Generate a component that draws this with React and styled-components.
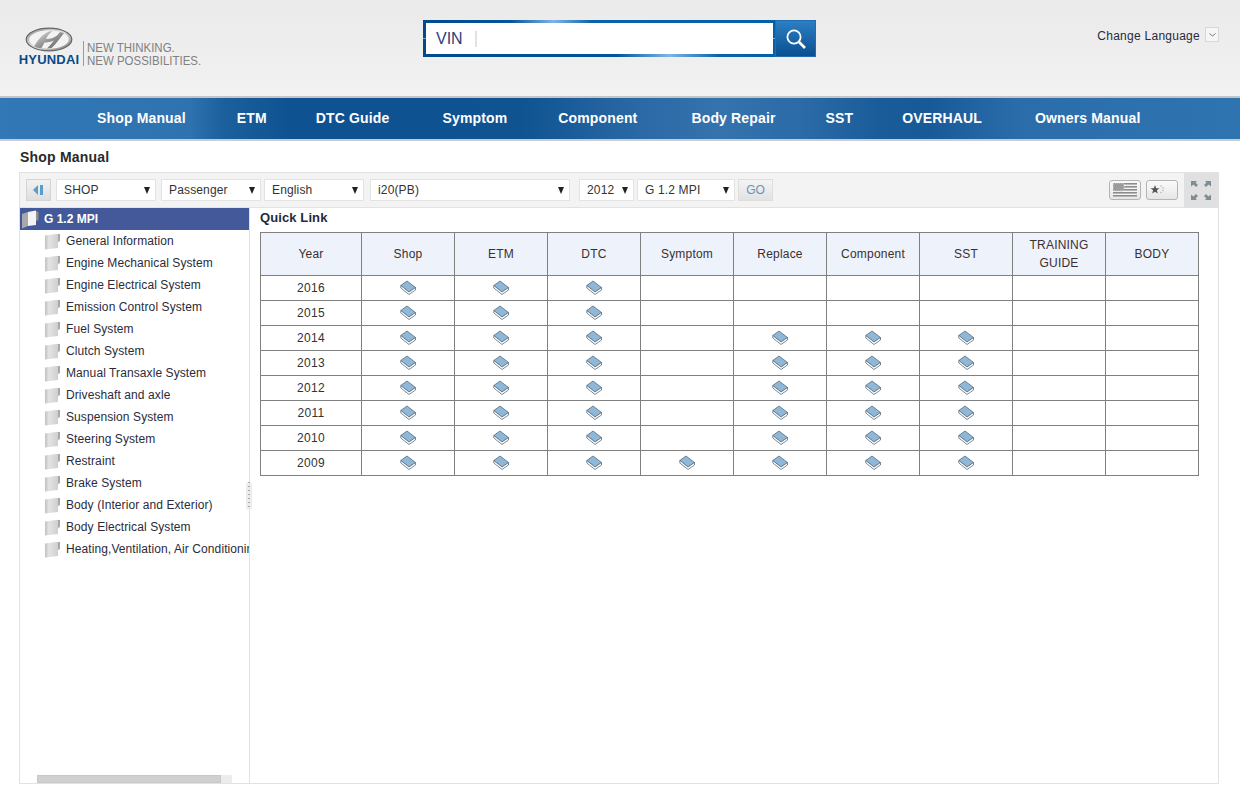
import React from 'react'
import styled, { createGlobalStyle } from 'styled-components'

const GlobalStyle = createGlobalStyle`
  html, body { margin: 0; padding: 0; background: #fff; }
  body { font-family: "Liberation Sans", Arial, sans-serif; font-size: 12px; color: #222; }
`

const menus = ['Shop Manual', 'ETM', 'DTC Guide', 'Symptom', 'Component', 'Body Repair', 'SST', 'OVERHAUL', 'Owners Manual']
const tree = [
  'General Information', 'Engine Mechanical System', 'Engine Electrical System', 'Emission Control System',
  'Fuel System', 'Clutch System', 'Manual Transaxle System', 'Driveshaft and axle', 'Suspension System',
  'Steering System', 'Restraint', 'Brake System', 'Body (Interior and Exterior)', 'Body Electrical System',
  'Heating,Ventilation, Air Conditioning',
]
const columns = ['Year', 'Shop', 'ETM', 'DTC', 'Symptom', 'Replace', 'Component', 'SST', 'TRAINING GUIDE', 'BODY']
const rows = [
  { year: 2016, books: [1, 1, 1, 0, 0, 0, 0, 0, 0] },
  { year: 2015, books: [1, 1, 1, 0, 0, 0, 0, 0, 0] },
  { year: 2014, books: [1, 1, 1, 0, 1, 1, 1, 0, 0] },
  { year: 2013, books: [1, 1, 1, 0, 1, 1, 1, 0, 0] },
  { year: 2012, books: [1, 1, 1, 0, 1, 1, 1, 0, 0] },
  { year: 2011, books: [1, 1, 1, 0, 1, 1, 1, 0, 0] },
  { year: 2010, books: [1, 1, 1, 0, 1, 1, 1, 0, 0] },
  { year: 2009, books: [1, 1, 1, 1, 1, 1, 1, 0, 0] },
]
const selects = [
  { label: 'SHOP', width: 100, gap: 5 },
  { label: 'Passenger', width: 100, gap: 3 },
  { label: 'English', width: 100, gap: 6 },
  { label: 'i20(PB)', width: 200, gap: 9 },
  { label: '2012', width: 55, gap: 3 },
  { label: 'G 1.2 MPI', width: 98, gap: 3 },
]

const Header = styled.header`
  height: 96px;
  background: linear-gradient(#eaeaea, #f2f2f2);
  display: grid;
  grid-template-columns: 423px 393px 1fr;
`
const LogoWrap = styled.div`
  padding: 27px 0 0 18px;
  display: flex;
  align-items: flex-start;
`
const Brand = styled.div`
  width: 62px;
  display: flex;
  flex-direction: column;
  align-items: center;
`
const BrandName = styled.span`
  font-size: 13px;
  line-height: 12px;
  margin-top: 2px;
  font-weight: bold;
  letter-spacing: 0.2px;
  color: #0b4a86;
  white-space: nowrap;
`
const Tagline = styled.div`
  margin: 14px 0 0 3px;
  height: 25px;
  padding-left: 3px;
  border-left: 1px solid #9a9a9a;
  color: #808080;
  font-size: 13.5px;
  line-height: 13px;
  white-space: nowrap;
`
const TaglineText = styled.span`
  display: block;
  transform: scaleX(0.85);
  transform-origin: left center;
`
const SearchWrap = styled.div`
  padding-top: 20px;
`
const Search = styled.div`
  height: 37px;
  display: flex;
`
const SearchField = styled.div`
  flex: 1;
  padding: 3px 2px 3px 3px;
  background:
    linear-gradient(90deg, #014a8e 0%, #02559b 25%, #7db5e6 37%, #0a62a8 48%, #0660a7 100%) top / 100% 50% no-repeat,
    linear-gradient(90deg, #014a8e 0%, #02559b 55%, #7db5e6 70%, #0a62a8 84%, #0660a7 100%) bottom / 100% 50% no-repeat;
`
const SearchInner = styled.div`
  height: 100%;
  background: #fff;
  display: flex;
  align-items: center;
  padding-left: 10px;
`
const VinLabel = styled.span`
  font-size: 16px;
  color: #2a3f7e;
  width: 39px;
  height: 16px;
  line-height: 16px;
  border-right: 2px solid #e2e2e2;
`
const SearchButton = styled.div`
  width: 41px;
  border: 1px solid #1f6cb0;
  box-sizing: border-box;
  background: linear-gradient(#2c7fc4, #0a4f90);
  display: flex;
  align-items: center;
  justify-content: center;
`
const Language = styled.div`
  padding: 28px 21px 0 0;
  display: flex;
  justify-content: flex-end;
  align-items: flex-start;
  gap: 5px;
  letter-spacing: 0.26px;
  line-height: 16px;
  color: #2a2a3c;
`
const LanguageArrow = styled.span`
  width: 14px;
  height: 15px;
  margin-top: -1px;
  box-sizing: border-box;
  border: 1px solid #d8d8d8;
  background: #f6f6f6;
  display: flex;
  align-items: center;
  justify-content: center;
`
const Nav = styled.nav`
  height: 39px;
  padding: 0 0 2px 97px;
  border-top: 2px solid #c4c4c4;
  border-bottom: 2px solid #c9cdd2;
  background: linear-gradient(90deg, #3278b6 0, #2f72b0 190px, #1c5f9d 225px, #0e5291 290px, #0f5391 520px, #2a69a6 640px, #3473ad 720px, #2a6ba8 800px, #1a5c99 880px, #185a98 930px, #2b6dab 1020px, #2e74b0 1240px);
  display: flex;
  align-items: center;
`
const NavItem = styled.a`
  color: #fff;
  font-size: 14px;
  font-weight: bold;
  letter-spacing: 0.15px;
  margin-right: ${p => p.$gap}px;
  white-space: nowrap;
`
const Title = styled.h1`
  margin: 0;
  padding: 8px 0 0 20px;
  height: 23px;
  font-size: 14px;
  line-height: 16px;
  letter-spacing: 0.2px;
  color: #2a2a2a;
`
const Panel = styled.section`
  margin: 0 21px 0 19px;
  height: 612px;
  box-sizing: border-box;
  border: 1px solid #e2e2e2;
  display: flex;
  flex-direction: column;
`
const Toolbar = styled.div`
  height: 35px;
  flex: none;
  background: #f3f3f3;
  border-bottom: 1px solid #e2e2e2;
  display: flex;
  align-items: flex-start;
  padding: 6px 0 0 6px;
  box-sizing: border-box;
`
const BackButton = styled.div`
  width: 25px;
  height: 22px;
  box-sizing: border-box;
  border: 1px solid #d4d4d4;
  background: linear-gradient(#f2f2f2, #dedede);
  margin-right: 5px;
  display: flex;
  align-items: center;
  justify-content: center;
`
const Select = styled.div`
  width: ${p => p.$width}px;
  margin-right: ${p => p.$gap}px;
  height: 22px;
  box-sizing: border-box;
  flex: none;
  border: 1px solid #e3e3e3;
  background: #fff;
  display: flex;
  align-items: center;
  justify-content: space-between;
  padding: 0 4px 0 7px;
  letter-spacing: 0.15px;
  color: #333;
`
const SelectArrow = styled.span`
  width: 0;
  height: 0;
  margin-right: 1px;
  border-left: 3px solid transparent;
  border-right: 3px solid transparent;
  border-top: 7px solid #222;
`
const GoButton = styled.div`
  width: 35px;
  height: 22px;
  box-sizing: border-box;
  border: 1px solid #dedede;
  background: linear-gradient(#f4f4f4, #e2e2e2);
  color: #6a93b8;
  text-align: center;
  line-height: 20px;
`
const ToolbarRight = styled.div`
  margin-left: auto;
  margin-top: -6px;
  display: flex;
  align-items: flex-start;
`
const FlagButton = styled.div`
  width: 32px;
  height: 20px;
  margin: 7px 5px 0 0;
  box-sizing: border-box;
  border: 1px solid #b4b4b4;
  border-radius: 3px;
  background: linear-gradient(#fafafa, #e6e6e6);
  display: flex;
  align-items: center;
  padding-left: 3px;
`
const ExpandBox = styled.div`
  margin-left: 1px;
  width: 34px;
  height: 34px;
  background: #e0e0e0;
  display: flex;
  align-items: center;
  justify-content: center;
`
const Content = styled.div`
  flex: 1;
  display: flex;
  min-height: 0;
`
const Sidebar = styled.aside`
  position: relative;
  width: 230px;
  flex: none;
  box-sizing: border-box;
  border-right: 1px solid #e2e2e2;
`
const TreeRoot = styled.div`
  height: 22px;
  background: #44599a;
  color: #fff;
  font-weight: bold;
  display: flex;
  align-items: center;
  padding-left: 1px;
  gap: 5px;
`
const TreeList = styled.ul`
  list-style: none;
  margin: 0;
  padding: 0;
`
const TreeItem = styled.li`
  height: 22px;
  display: flex;
  align-items: center;
  padding-left: 25px;
  gap: 5px;
  letter-spacing: 0.09px;
  color: #2b2b3a;
  white-space: nowrap;
  overflow: hidden;
`
const Splitter = styled.div`
  position: absolute;
  right: -3px;
  top: 274px;
  width: 6px;
  height: 28px;
  border-radius: 3px;
  background: repeating-linear-gradient(#a8a8a8 0 1px, transparent 1px 4px) center / 2px 100% no-repeat, #ececec;
`
const ScrollTrack = styled.div`
  position: absolute;
  left: 17px;
  bottom: 0;
  width: 195px;
  height: 8px;
  background: #ececec;
`
const ScrollThumb = styled.div`
  width: 184px;
  height: 100%;
  box-sizing: border-box;
  background: #d0d0d0;
  border: 1px solid #c8c8c8;
`
const Main = styled.main`
  flex: 1;
  padding-left: 10px;
`
const QuickTitle = styled.h2`
  margin: 0;
  height: 24px;
  font-size: 13px;
  line-height: 19px;
  letter-spacing: 0.1px;
  color: #1f2a3a;
`
const Table = styled.table`
  width: 939px;
  border-collapse: collapse;
  table-layout: fixed;
`
const Th = styled.th`
  height: 42px;
  width: ${p => (p.$first ? '100px' : 'auto')};
  padding: 0;
  border: 1px solid #808080;
  background: #eef2fb;
  font-weight: normal;
  line-height: 18px;
  color: #3a3030;
  letter-spacing: 0.2px;
`
const Td = styled.td`
  height: 24px;
  padding: 0;
  border: 1px solid #808080;
  text-align: center;
  color: #333;
  letter-spacing: 0.3px;
`

const HyundaiEmblem = () => (
  <svg width="48" height="25" viewBox="0 0 48 25">
    <defs>
      <linearGradient id="emblem" x1="0" y1="0" x2="1" y2="1">
        <stop offset="0" stopColor="#8a8a8a" />
        <stop offset="0.5" stopColor="#e6e6e6" />
        <stop offset="1" stopColor="#6f6f6f" />
      </linearGradient>
      <linearGradient id="emblemH" x1="0" y1="0" x2="1" y2="1">
        <stop offset="0" stopColor="#e4e4e4" />
        <stop offset="0.55" stopColor="#8f8f8f" />
        <stop offset="1" stopColor="#5f5f5f" />
      </linearGradient>
    </defs>
    <ellipse cx="24" cy="12.500" rx="22.800" ry="11.300" fill="url(#emblem)" stroke="#666" strokeWidth="1.200" />
    <ellipse cx="24" cy="12.500" rx="19.800" ry="9.200" fill="#f3f3f3" />
    <path d="M9 19.500C12 14 17 7 24 4.500L27.500 4C24 6.500 22.500 9 21 12C25 12 29 11 32 8.500L35 5L39 6C35 11 31 17 26.500 21L22 21.500C25 18 27 16 29 13.500C25.500 15 22 15.500 19.500 15.500L16.500 21C14 21 11 20.500 9 19.500Z" fill="url(#emblemH)" />
  </svg>
)

const SearchIcon = () => (
  <svg width="22" height="22" viewBox="0 0 22 22" fill="none" stroke="#fff">
    <circle cx="9" cy="9" r="6.600" strokeWidth="1.800" />
    <path d="M14 14l6 6" strokeWidth="2.600" />
  </svg>
)

const BackIcon = () => (
  <svg width="14" height="12" viewBox="0 0 14 12">
    <path d="M6 1v10L1 6z" fill="#5a9ccb" />
    <rect x="8" y="1" width="3" height="10" fill="#5a9ccb" />
  </svg>
)

const UsFlag = () => (
  <svg width="24" height="14" viewBox="0 0 24 14">
    <rect width="24" height="14" fill="#f4f4f4" />
    {[0, 3, 6, 9, 12].map(y => <rect key={y} y={y} width="24" height="1.600" fill="#8c8c8c" />)}
    <rect width="11" height="8" fill="#9c9c9c" />
    <rect width="11" height="8" fill="none" stroke="#d5d5d5" strokeDasharray="1 1" />
  </svg>
)

const ChinaFlag = () => (
  <svg width="16" height="12" viewBox="0 0 16 12">
    <path d="M5 1l1.200 3.200 3.300.1-2.600 2 .9 3.200L5 7.700 2.200 9.500l.9-3.200-2.600-2 3.300-.1z" fill="#555" />
    <g fill="#aaa">
      <circle cx="11" cy="2" r=".7" /><circle cx="13" cy="4" r=".7" /><circle cx="13" cy="6.500" r=".7" /><circle cx="11" cy="8.500" r=".7" />
    </g>
  </svg>
)

const ExpandIcon = () => (
  <svg width="20" height="19" viewBox="0 0 20 19" fill="#808c94">
    <path d="M0 0h6L4.500 1.500 7 4 5 6 2.500 3.500 0 5.500z" />
    <path d="M20 0h-6l1.500 1.500L13 4l2 2 2.500-2.500L20 5.500z" />
    <path d="M0 19h6l-1.500-1.500L7 15l-2-2-2.500 2.500L0 13.500z" />
    <path d="M20 19h-6l1.500-1.500L13 15l2-2 2.500 2.500 2.500-2z" />
  </svg>
)

const PageIcon = () => (
  <svg width="16" height="17" viewBox="0 0 16 17" style={{ flex: 'none' }}>
    <defs>
      <linearGradient id="page" x1="0" y1="0" x2="1" y2="0">
        <stop offset="0" stopColor="#c0c0c0" />
        <stop offset="0.3" stopColor="#e4e4e4" />
        <stop offset="1" stopColor="#cfcfcf" />
      </linearGradient>
    </defs>
    <path d="M13 1h2v7l-2 1z" fill="#a8a8a8" />
    <path d="M0 2.500L13 .8V15L0 16.500z" fill="url(#page)" />
  </svg>
)

const RootIcon = () => (
  <svg width="18" height="19" viewBox="0 0 18 19" style={{ flex: 'none' }}>
    <path d="M1 4L7 2V16L1 18.500z" fill="#a9a9a9" />
    <path d="M7 2L15 .5V15L7 16z" fill="#f4f4f4" />
    <path d="M15 1L17.500 2V10L15 11z" fill="#8f8f8f" />
  </svg>
)

const BookIcon = () => (
  <svg width="17" height="16" viewBox="0 0 17 16" style={{ display: 'block', margin: '0 auto' }}>
    <path d="M.8 5.500L7 1l8.500 6.500L9 12z" fill="#8fb8d8" stroke="#566b7c" strokeWidth=".8" />
    <path d="M.8 5.500v2.500L9 14.500l6.500-4.500V7.500L9 12z" fill="#fff" stroke="#566b7c" strokeWidth=".8" />
  </svg>
)

const navGaps = [51, 49, 53, 51, 54, 50, 49, 53, 0]

export default function App() {
  return (
    <>
      <GlobalStyle />
      <Header>
        <LogoWrap>
          <Brand>
            <HyundaiEmblem />
            <BrandName>HYUNDAI</BrandName>
          </Brand>
          <Tagline>
            <TaglineText>NEW THINKING.</TaglineText>
            <TaglineText>NEW POSSIBILITIES.</TaglineText>
          </Tagline>
        </LogoWrap>
        <SearchWrap>
          <Search>
            <SearchField>
              <SearchInner><VinLabel>VIN</VinLabel></SearchInner>
            </SearchField>
            <SearchButton><SearchIcon /></SearchButton>
          </Search>
        </SearchWrap>
        <Language>
          Change Language
          <LanguageArrow>
            <svg width="7" height="4" viewBox="0 0 7 4" fill="none" stroke="#777"><path d="M.5.500l3 2.500 3-2.500" /></svg>
          </LanguageArrow>
        </Language>
      </Header>
      <Nav>
        {menus.map((m, i) => <NavItem key={m} $gap={navGaps[i]}>{m}</NavItem>)}
      </Nav>
      <Title>Shop Manual</Title>
      <Panel>
        <Toolbar>
          <BackButton><BackIcon /></BackButton>
          {selects.map(s => (
            <Select key={s.label} $width={s.width} $gap={s.gap}>
              {s.label}
              <SelectArrow />
            </Select>
          ))}
          <GoButton>GO</GoButton>
          <ToolbarRight>
            <FlagButton><UsFlag /></FlagButton>
            <FlagButton><ChinaFlag /></FlagButton>
            <ExpandBox><ExpandIcon /></ExpandBox>
          </ToolbarRight>
        </Toolbar>
        <Content>
          <Sidebar>
            <TreeRoot><RootIcon />G 1.2 MPI</TreeRoot>
            <TreeList>
              {tree.map(t => <TreeItem key={t}><PageIcon />{t}</TreeItem>)}
            </TreeList>
            <Splitter />
            <ScrollTrack><ScrollThumb /></ScrollTrack>
          </Sidebar>
          <Main>
            <QuickTitle>Quick Link</QuickTitle>
            <Table>
              <thead>
                <tr>{columns.map((c, i) => <Th key={c} $first={i === 0}>{c}</Th>)}</tr>
              </thead>
              <tbody>
                {rows.map(r => (
                  <tr key={r.year}>
                    <Td>{r.year}</Td>
                    {r.books.map((b, i) => <Td key={i}>{b ? <BookIcon /> : null}</Td>)}
                  </tr>
                ))}
              </tbody>
            </Table>
          </Main>
        </Content>
      </Panel>
    </>
  )
}
